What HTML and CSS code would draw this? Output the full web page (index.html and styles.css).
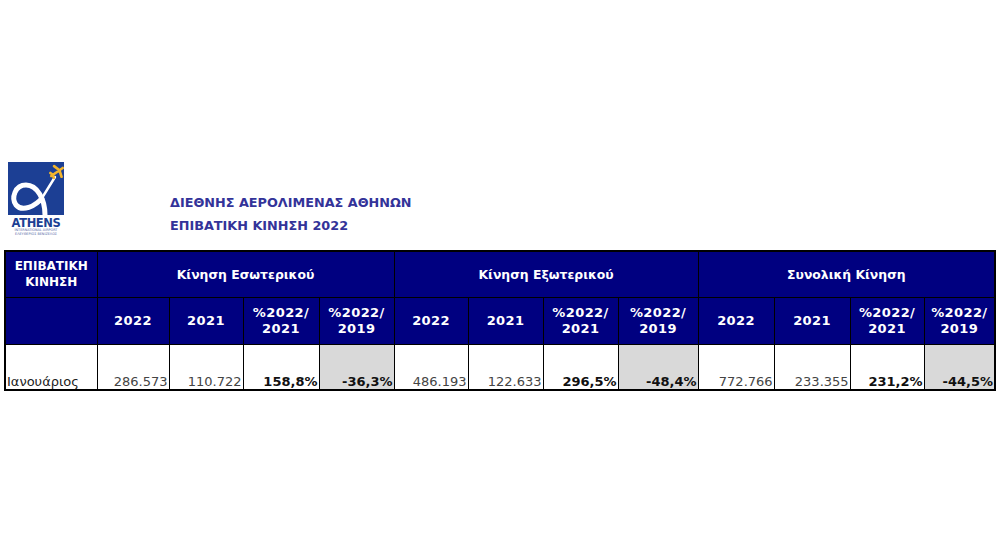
FILE: index.html
```html
<!DOCTYPE html>
<html lang="el">
<head>
<meta charset="utf-8">
<title>Επιβατική Κίνηση 2022</title>
<link rel="stylesheet" href="styles.css">
</head>
<body>
<div class="page">
  <div class="top">
    <div class="logo">
      <svg class="logo-mark" width="56" height="53" viewBox="0 0 56 53">
        <rect width="56" height="53" fill="#1c3f94"/>
        <path d="M37 53 C37 37 29 23 18 23 C7 23 3 36 8 43 C14 50 27 45 35 35" fill="none" stroke="#fff" stroke-width="5"/>
        <path d="M34 36 L47 15" fill="none" stroke="#fff" stroke-width="2.4" stroke-linecap="round"/>
        <g transform="translate(49 10) rotate(-35)">
          <path d="M-7 0 L7 0 M1 -6.5 L3 0 L1 6.5 M-6 -3 L-5 0 L-6 3" stroke="#f2b42c" stroke-width="2.6" fill="none" stroke-linecap="round"/>
        </g>
      </svg>
      <div class="logo-name">ATHENS</div>
      <div class="logo-sub">INTERNATIONAL AIRPORT</div>
      <div class="logo-sub">ΕΛΕΥΘΕΡΙΟΣ ΒΕΝΙΖΕΛΟΣ</div>
    </div>
    <div class="titles">
      <div class="title">ΔΙΕΘΝΗΣ ΑΕΡΟΛΙΜΕΝΑΣ ΑΘΗΝΩΝ</div>
      <div class="title">ΕΠΙΒΑΤΙΚΗ ΚΙΝΗΣΗ 2022</div>
    </div>
  </div>
  <table class="traffic">
    <colgroup>
      <col class="c-first">
      <col class="c72"><col class="c74"><col class="c76"><col class="c75">
      <col class="c74"><col class="c75"><col class="c75"><col class="c80">
      <col class="c76"><col class="c76"><col class="c74"><col class="c71">
    </colgroup>
    <tr class="h1">
      <th class="corner">ΕΠΙΒΑΤΙΚΗ<br>ΚΙΝΗΣΗ</th>
      <th colspan="4">Κίνηση Εσωτερικού</th>
      <th colspan="4">Κίνηση Εξωτερικού</th>
      <th colspan="4">Συνολική Κίνηση</th>
    </tr>
    <tr class="h2">
      <th></th>
      <th>2022</th><th>2021</th><th>%2022/<br>2021</th><th>%2022/<br>2019</th>
      <th>2022</th><th>2021</th><th>%2022/<br>2021</th><th>%2022/<br>2019</th>
      <th>2022</th><th>2021</th><th>%2022/<br>2021</th><th>%2022/<br>2019</th>
    </tr>
    <tr class="data">
      <td class="month">Ιανουάριος</td>
      <td class="num">286.573</td><td class="num">110.722</td><td class="pct">158,8%</td><td class="pct grey">-36,3%</td>
      <td class="num">486.193</td><td class="num">122.633</td><td class="pct">296,5%</td><td class="pct grey">-48,4%</td>
      <td class="num">772.766</td><td class="num">233.355</td><td class="pct">231,2%</td><td class="pct grey">-44,5%</td>
    </tr>
  </table>
</div>
</body>
</html>
```
FILE: styles.css
```css
html, body {
  margin: 0;
  padding: 0;
  background: #fff;
}
.page {
  font-family: "DejaVu Sans", Verdana, sans-serif;
  padding: 162px 0 0 4px;
}
.top {
  display: flex;
  height: 88px;
}
.logo {
  width: 56px;
  margin-left: 4px;
  display: flex;
  flex-direction: column;
}
.logo-mark {
  display: block;
}
.logo-name {
  font-family: "DejaVu Sans", sans-serif;
  font-weight: bold;
  font-size: 11.5px;
  letter-spacing: -0.4px;
  color: #1c3f94;
  line-height: 10px;
  margin-top: 3px;
  text-align: center;
}
.logo-sub {
  font-size: 3.4px;
  color: #5a6aa8;
  line-height: 4px;
  text-align: center;
  white-space: nowrap;
}
.titles {
  margin-left: 106px;
  padding-top: 33px;
  display: flex;
  flex-direction: column;
  gap: 7px;
}
.title {
  font-weight: bold;
  font-size: 12.8px;
  line-height: 16px;
  color: #333399;
  white-space: nowrap;
}
.traffic {
  border-collapse: collapse;
  table-layout: fixed;
  width: 991px;
  border: 2px solid #000;
}
.c-first { width: 92px; }
.c71 { width: 71px; }
.c72 { width: 72px; }
.c74 { width: 74px; }
.c75 { width: 75px; }
.c76 { width: 76px; }
.c80 { width: 80px; }
.traffic th,
.traffic td {
  border: 1px solid #000;
  padding: 0;
}
.traffic th {
  background: #000080;
  color: #fff;
  font-weight: bold;
  text-align: center;
  vertical-align: middle;
}
.h1 th {
  height: 45px;
  font-size: 12.4px;
  line-height: 16px;
}
.h1 th.corner {
  vertical-align: top;
  padding-top: 6px;
  height: 39px;
  font-size: 12px;
}
.h2 th {
  height: 46px;
  font-size: 13px;
  line-height: 16px;
  letter-spacing: 0.4px;
}
.data td {
  height: 44px;
  vertical-align: bottom;
  font-size: 13px;
  line-height: 15px;
  text-align: right;
  padding-right: 1px;
}
.data td.month {
  text-align: left;
  color: #222;
  padding-left: 1px;
}
.num {
  color: #444;
}
.pct {
  font-weight: bold;
  color: #111;
}
.grey {
  background: #d9d9d9;
}
```
